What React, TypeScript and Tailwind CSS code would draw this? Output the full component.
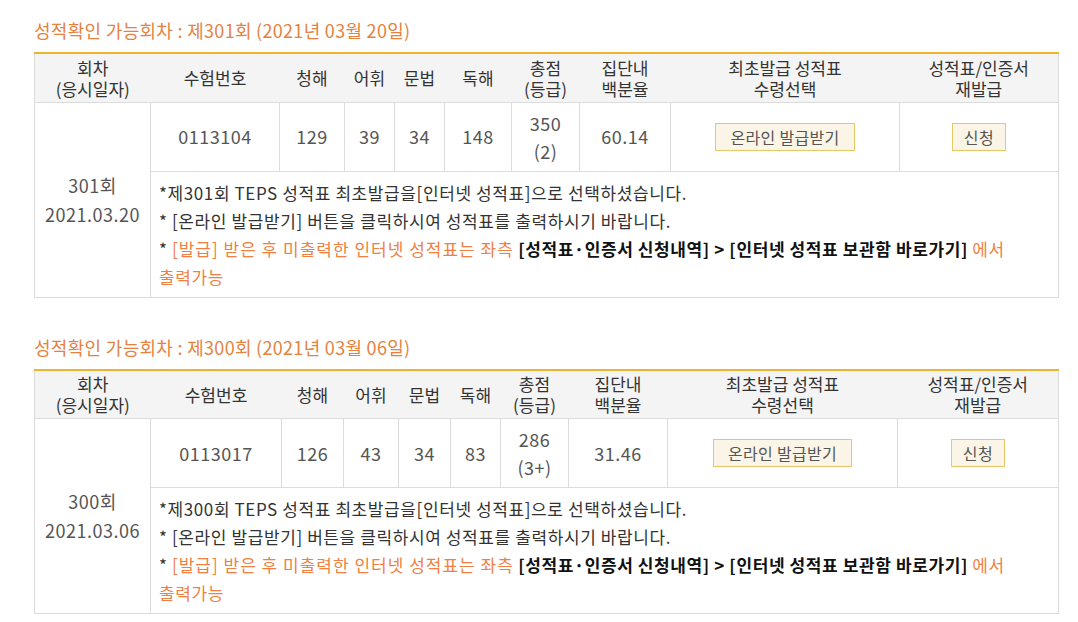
const FONT = "font-['Noto_Sans_CJK_KR','Noto_Sans',sans-serif]";

interface Round {
  round: number;
  titleDate: string;
  date: string;
  examNo: string;
  listening: number;
  vocab: number;
  grammar: number;
  reading: number;
  total: number;
  grade: string;
  percentile: string;
  cols: string[];
}

const rounds: Round[] = [
  {
    round: 301,
    titleDate: "2021년 03월 20일",
    date: "2021.03.20",
    examNo: "0113104",
    listening: 129,
    vocab: 39,
    grammar: 34,
    reading: 148,
    total: 350,
    grade: "2",
    percentile: "60.14",
    cols: ["w-[116px]", "w-[129px]", "w-[65px]", "w-[50px]", "w-[50px]", "w-[67px]", "w-[68px]", "w-[91px]", "w-[229px]", "w-[159px]"],
  },
  {
    round: 300,
    titleDate: "2021년 03월 06일",
    date: "2021.03.06",
    examNo: "0113017",
    listening: 126,
    vocab: 43,
    grammar: 34,
    reading: 83,
    total: 286,
    grade: "3+",
    percentile: "31.46",
    cols: ["w-[116px]", "w-[131px]", "w-[62px]", "w-[55px]", "w-[52px]", "w-[50px]", "w-[68px]", "w-[99px]", "w-[230px]", "w-[161px]"],
  },
];

function ScoreTable({ r }: { r: Round }) {
  const th = "font-normal text-[#333] text-[17px] leading-[21px] align-middle";
  const td = "border border-[#dcdcdc] text-center align-middle text-[18px] tracking-[0.5px] text-[#555]";
  const btn = "h-[28px] border border-[#e9c766] bg-[#faf5e6] text-[16px] text-[#555] leading-[26px]";
  return (
    <section>
      <h2 className="text-[18px] tracking-[0.3px] leading-[24px] text-[#e5823f] font-normal">
        성적확인 가능회차 : 제{r.round}회 ({r.titleDate})
      </h2>
      <table className="mt-[10px] w-[1024px] table-fixed border-collapse border-x border-b border-[#dcdcdc] border-t-2 border-t-[#efb52e]">
        <colgroup>
          {r.cols.map((c, i) => (
            <col key={i} className={c} />
          ))}
        </colgroup>
        <thead>
          <tr className="h-[49px] bg-[#f4f4f4] border-b border-[#dcdcdc]">
            <th className={th}>회차<br />(응시일자)</th>
            <th className={th}>수험번호</th>
            <th className={th}>청해</th>
            <th className={th}>어휘</th>
            <th className={th}>문법</th>
            <th className={th}>독해</th>
            <th className={th}>총점<br />(등급)</th>
            <th className={th}>집단내<br />백분율</th>
            <th className={th}>최초발급 성적표<br />수령선택</th>
            <th className={th}>성적표/인증서<br />재발급</th>
          </tr>
        </thead>
        <tbody>
          <tr className="h-[69px]">
            <td rowSpan={2} className={`${td} leading-[29px]`}>
              {r.round}회<br />{r.date}
            </td>
            <td className={td}>{r.examNo}</td>
            <td className={td}>{r.listening}</td>
            <td className={td}>{r.vocab}</td>
            <td className={td}>{r.grammar}</td>
            <td className={td}>{r.reading}</td>
            <td className={`${td} leading-[28px]`}>
              {r.total}<br />({r.grade})
            </td>
            <td className={td}>{r.percentile}</td>
            <td className={td}>
              <button className={`${btn} px-[14px] tracking-[0.3px]`}>온라인 발급받기</button>
            </td>
            <td className={td}>
              <button className={`${btn} px-[11px]`}>신청</button>
            </td>
          </tr>
          <tr>
            <td colSpan={9} className="border border-[#dcdcdc] px-[8px] pt-[7px] pb-[6px] text-[17px] tracking-[0.6px] leading-[28px] text-[#333]">
              <p>*제{r.round}회 TEPS 성적표 최초발급을[인터넷 성적표]으로 선택하셨습니다.</p>
              <p>* [온라인 발급받기] 버튼을 클릭하시여 성적표를 출력하시기 바랍니다.</p>
              <p className="text-[#f07f43]">
                <span className="text-[#333]">* </span>
                <span className="tracking-[1px]">[발급] 받은 후 미출력한 인터넷 성적표는 좌측</span>{" "}
                <b className="text-[#111] font-bold tracking-[0.6px]">[성적표·인증서 신청내역] &gt; [인터넷 성적표 보관함 바로가기]</b>{" "}
                에서
                <br />
                출력가능
              </p>
            </td>
          </tr>
        </tbody>
      </table>
    </section>
  );
}

export default function App() {
  return (
    <div className={`${FONT} bg-white w-[1078px] h-[622px] overflow-hidden pl-[34px] pt-[18px] flex flex-col gap-[37px]`}>
      {rounds.map((r) => (
        <ScoreTable key={r.round} r={r} />
      ))}
    </div>
  );
}
